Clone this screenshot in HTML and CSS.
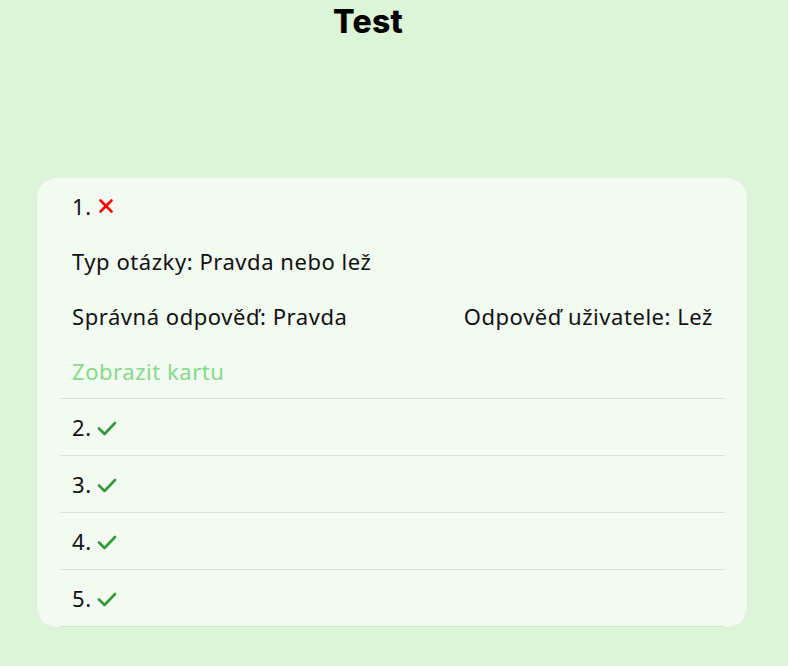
FILE: index.html
```html
<!DOCTYPE html>
<html lang="cs">
<head>
<meta charset="utf-8">
<title>Test</title>
<link rel="stylesheet" href="styles.css">
</head>
<body>
<h1 class="title">Test</h1>
<main class="wrap">
  <section class="card">
    <ul class="results">
      <li class="item open">
        <div class="row head">1. <svg class="icon" viewBox="0 0 16 16" width="16" height="16"><path d="M2.5 2.5 L13.5 13.5 M13.5 2.5 L2.5 13.5" stroke="#ff0000" stroke-width="2.6" stroke-linecap="round" fill="none"/></svg></div>
        <div class="row">Typ otázky: Pravda nebo lež</div>
        <div class="row split"><span>Správná odpověď: Pravda</span><span>Odpověď uživatele: Lež</span></div>
        <div class="row link">Zobrazit kartu</div>
      </li>
      <li class="item"><div class="row-sm">2. <svg class="icon ok" viewBox="0 0 20 16" width="20" height="16"><path d="M2 8.5 L7.5 14 L18 3" stroke="#35993a" stroke-width="2.6" stroke-linecap="round" stroke-linejoin="round" fill="none"/></svg></div></li>
      <li class="item"><div class="row-sm">3. <svg class="icon ok" viewBox="0 0 20 16" width="20" height="16"><path d="M2 8.5 L7.5 14 L18 3" stroke="#35993a" stroke-width="2.6" stroke-linecap="round" stroke-linejoin="round" fill="none"/></svg></div></li>
      <li class="item"><div class="row-sm">4. <svg class="icon ok" viewBox="0 0 20 16" width="20" height="16"><path d="M2 8.5 L7.5 14 L18 3" stroke="#35993a" stroke-width="2.6" stroke-linecap="round" stroke-linejoin="round" fill="none"/></svg></div></li>
      <li class="item"><div class="row-sm">5. <svg class="icon ok" viewBox="0 0 20 16" width="20" height="16"><path d="M2 8.5 L7.5 14 L18 3" stroke="#35993a" stroke-width="2.6" stroke-linecap="round" stroke-linejoin="round" fill="none"/></svg></div></li>
    </ul>
  </section>
</main>
</body>
</html>
```
FILE: styles.css
```css
html, body {
  margin: 0;
  padding: 0;
}
body {
  background: #dcf4d8;
  font-family: "Noto Sans", "Open Sans", sans-serif;
  color: #111;
  width: 788px;
  height: 666px;
  overflow: hidden;
}
.title {
  margin: 0;
  padding: 2px 52px 0 0;
  height: 176px;
  box-sizing: border-box;
  text-align: center;
  font-family: "Inter", "DejaVu Sans", sans-serif;
  font-weight: 800;
  font-size: 32px;
  line-height: 40px;
  letter-spacing: 0.3px;
  color: #000;
}
.wrap {
  padding: 2px 41px 0 37px;
}
.card {
  background: #f3faf1;
  border-radius: 20px;
  padding: 0 22px 0 23px;
}
.results {
  list-style: none;
  margin: 0;
  padding: 0;
}
.item {
  border-bottom: 1px solid #dcdedb;
}
.row {
  height: 55px;
  display: flex;
  align-items: center;
  padding: 0 12px;
  font-size: 22px;
  letter-spacing: 0.55px;
}
.row-sm {
  height: 56px;
  display: flex;
  align-items: center;
  padding: 0 12px;
  font-size: 22px;
  letter-spacing: 0.55px;
}
.icon {
  margin-left: 6px;
  display: block;
}
.icon.ok {
  margin-left: 5px;
  margin-top: 1px;
}
.split {
  justify-content: space-between;
}
.link {
  color: #86d98a;
}
```
